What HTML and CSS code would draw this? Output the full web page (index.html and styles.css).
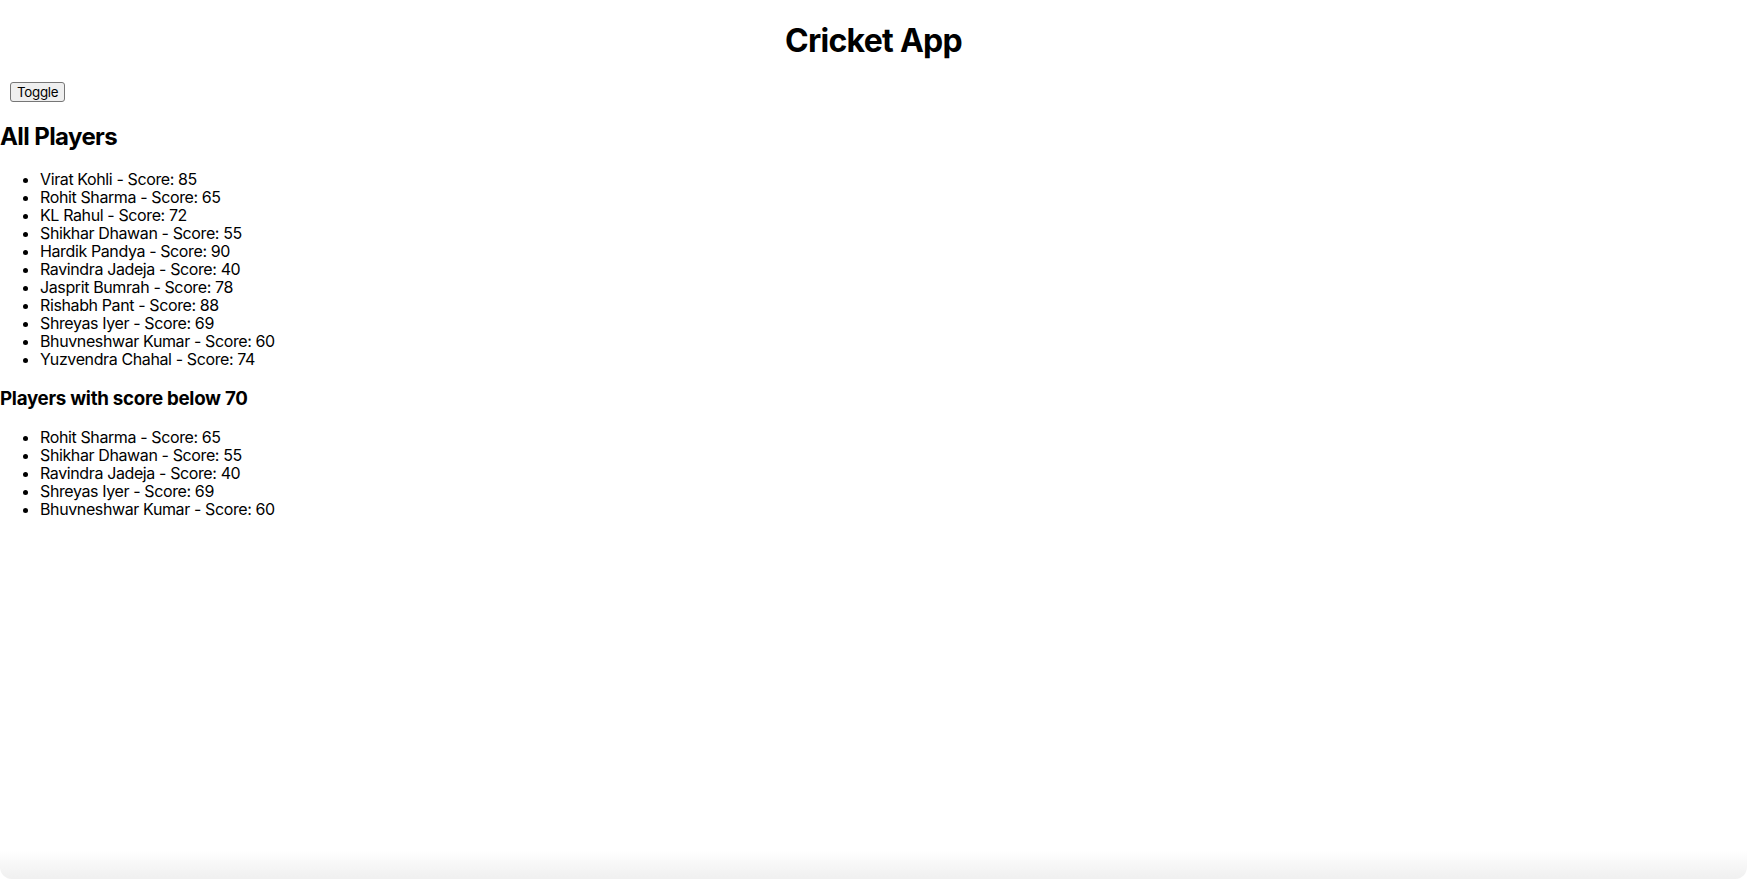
FILE: index.html
```html
<!DOCTYPE html>
<html lang="en">
<head>
<meta charset="utf-8">
<title>Cricket App</title>
<link rel="stylesheet" href="styles.css">
</head>
<body>
<div class="app">
  <h1 class="title">Cricket App</h1>
  <button class="toggle">Toggle</button>
  <h2 class="section-title">All Players</h2>
  <ul class="players">
    <li>Virat Kohli - Score: 85</li>
    <li>Rohit Sharma - Score: 65</li>
    <li>KL Rahul - Score: 72</li>
    <li>Shikhar Dhawan - Score: 55</li>
    <li>Hardik Pandya - Score: 90</li>
    <li>Ravindra Jadeja - Score: 40</li>
    <li>Jasprit Bumrah - Score: 78</li>
    <li>Rishabh Pant - Score: 88</li>
    <li>Shreyas Iyer - Score: 69</li>
    <li>Bhuvneshwar Kumar - Score: 60</li>
    <li>Yuzvendra Chahal - Score: 74</li>
  </ul>
  <h3 class="sub-title">Players with score below 70</h3>
  <ul class="players">
    <li>Rohit Sharma - Score: 65</li>
    <li>Shikhar Dhawan - Score: 55</li>
    <li>Ravindra Jadeja - Score: 40</li>
    <li>Shreyas Iyer - Score: 69</li>
    <li>Bhuvneshwar Kumar - Score: 60</li>
  </ul>
</div>
<div class="window-edge"></div>
</body>
</html>
```
FILE: styles.css
```css
html, body {
  margin: 0;
  background: #fff;
}
body {
  font-family: Inter, "Noto Sans", sans-serif;
  color: #000;
  font-size: 16px;
}
.app {
  display: block;
}
.title {
  text-align: center;
  font-size: 32px;
  font-weight: 700;
  letter-spacing: -0.022em;
  margin: 21px 0;
}
.toggle {
  margin-left: 10px;
  font-family: Inter, "Liberation Sans", sans-serif;
  font-size: 13.33px;
  letter-spacing: -0.02em;
  padding: 1px 6px;
  border: 1px solid #767676;
  border-radius: 3px;
  background: #efefef;
  color: #000;
}
.section-title {
  font-size: 24px;
  font-weight: 700;
  letter-spacing: -0.025em;
  margin: 20px 0 19px;
}
.sub-title {
  font-size: 18.72px;
  font-weight: 700;
  letter-spacing: -0.014em;
  margin: 18.72px 0 18px;
}
.players {
  margin: 16px 0;
  padding-left: 40px;
  line-height: 18px;
  letter-spacing: -0.024em;
}
.window-edge {
  position: fixed;
  left: 0;
  right: 0;
  bottom: 0;
  height: 28px;
  background: linear-gradient(to bottom, rgba(240,240,240,0), #efefef);
  border-radius: 0 0 12px 12px;
  pointer-events: none;
}
```
